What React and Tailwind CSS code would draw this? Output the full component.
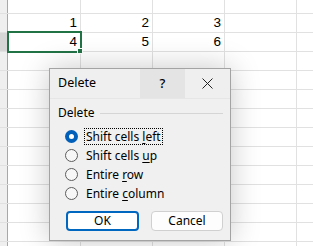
const ROWS = [
  { h: "h-[14px]", cells: ["", "", "", ""] },
  { h: "h-[19px]", cells: ["1", "2", "3", ""] },
  { h: "h-[19px]", cells: ["4", "5", "6", ""], selected: true },
  ...Array.from({ length: 11 }, () => ({ h: "h-[19px]", cells: ["", "", "", ""] })),
];

const OPTIONS = [
  { pre: "Shift cells ", key: "l", post: "eft", checked: true },
  { pre: "Shift cells ", key: "u", post: "p" },
  { pre: "Entire ", key: "r", post: "ow" },
  { pre: "Entire ", key: "c", post: "olumn" },
];

function Sheet() {
  return (
    <div className="w-full">
      {ROWS.map((row, i) => (
        <div key={i} className={`flex ${row.h} border-b border-[#e1e1e1]`}>
          <div
            className={`w-[8px] shrink-0 border-r border-[#a8a8a8] ${
              row.selected ? "bg-[#d6d6d6]" : "bg-[#efefef]"
            }`}
          />
          {row.cells.map((c, j) => (
            <div
              key={j}
              className={`${j === 0 ? "w-[73px]" : "w-[72px]"} shrink-0 border-r border-[#e1e1e1] pr-[3px] text-right text-[13.5px] leading-[18px] text-black`}
              style={{ fontFamily: "'Liberation Sans', Arial, sans-serif" }}
            >
              {c}
            </div>
          ))}
          <div className="flex-1" />
        </div>
      ))}
    </div>
  );
}

function Radio({ checked }) {
  if (checked) {
    return (
      <span className="flex h-[13px] w-[13px] items-center justify-center rounded-full bg-[#005fb8]">
        <span className="h-[5px] w-[5px] rounded-full bg-white" />
      </span>
    );
  }
  return <span className="h-[13px] w-[13px] rounded-full border border-[#5c5c5c] bg-[#f7f7f7]" />;
}

function DeleteDialog() {
  return (
    <div
      className="absolute left-[49px] top-[68px] flex h-[173px] w-[182px] flex-col border border-[#a3a3a3] bg-[#f0f0f0] text-[12px] text-black shadow-[0_0_28px_rgba(0,0,0,0.22)]"
      style={{ fontFamily: "'Noto Sans', 'Open Sans', sans-serif" }}
    >
      <div className="flex h-[30px] items-stretch border-b border-[#e6e6e6] bg-[#efefef]">
        <div className="flex flex-1 items-center pl-[8px] text-[12.5px]">Delete</div>
        <div className="flex w-[45px] items-center justify-center bg-[#e4e4e4] text-[13px] font-medium">?</div>
        <div className="flex w-[45px] items-center justify-center">
          <svg width="11" height="11" viewBox="0 0 11 11">
            <path d="M0.5 0.5 L10.5 10.5 M10.5 0.5 L0.5 10.5" stroke="#222" strokeWidth="1" fill="none" />
          </svg>
        </div>
      </div>
      <div className="flex items-center gap-[5px] pl-[8px] pr-[7px] pt-[6px]">
        <span className="leading-[16px]">Delete</span>
        <div className="h-px flex-1 bg-[#d5d5d5]" />
      </div>
      <div className="flex flex-col pl-[15px] pt-[6px]">
        {OPTIONS.map((o, i) => (
          <div key={i} className="flex h-[19px] items-center gap-[6px]">
            <Radio checked={o.checked} />
            <span
              className={`px-[1px] leading-[15px] ${
                o.checked ? "border border-dotted border-black" : "border border-transparent"
              }`}
            >
              {o.pre}
              <span className="underline underline-offset-2">{o.key}</span>
              {o.post}
            </span>
          </div>
        ))}
      </div>
      <div className="flex gap-[12px] pl-[16px] pt-[8px]">
        <button className="h-[20px] w-[73px] rounded-[4px] border-2 border-[#0067c0] bg-white text-[12px] leading-[14px]">
          OK
        </button>
        <button className="h-[20px] w-[72px] rounded-[4px] border border-[#d0d0d0] bg-[#fdfdfd] text-[12px] leading-[16px]">
          Cancel
        </button>
      </div>
    </div>
  );
}

export default function App() {
  return (
    <div className="relative h-[246px] w-[313px] overflow-hidden bg-white">
      <Sheet />
      <div className="absolute left-[7px] top-[31px] h-[22px] w-[75px] border-2 border-[#217346]" />
      <div className="absolute left-[77px] top-[48px] h-[6px] w-[6px] border border-white bg-[#217346]" />
      <DeleteDialog />
    </div>
  );
}
